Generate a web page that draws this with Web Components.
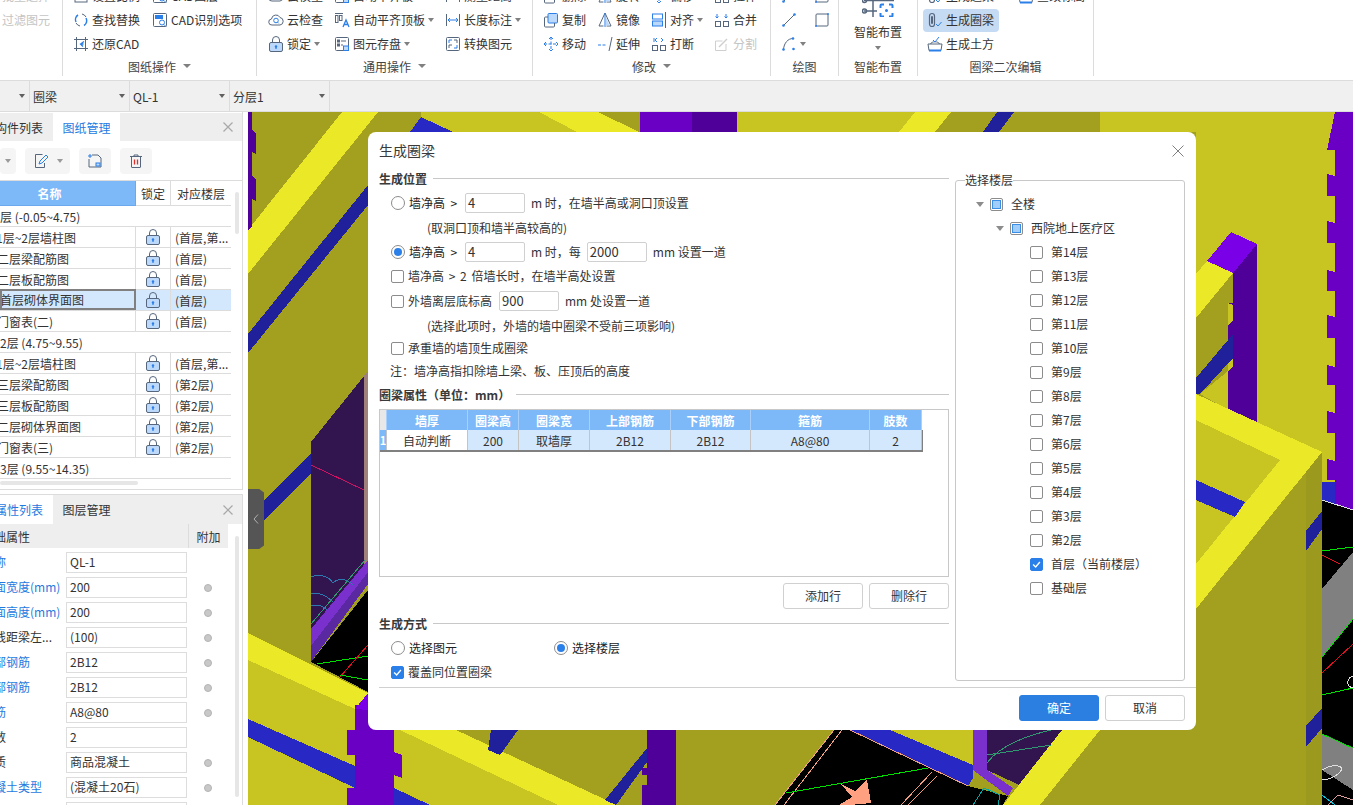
<!DOCTYPE html>
<html lang="zh">
<head>
<meta charset="utf-8">
<title>生成圈梁</title>
<style>
    html, body { margin: 0; height: 100%; overflow: hidden; background: #fff; font: 12px "Noto Sans CJK SC", sans-serif; color: #333; }
    body { display: flex; flex-direction: column; width: 1353px; height: 805px; }
    .blank { display: block; }
</style>
</head>
<body>
<rb-bar>
    <rb-group width="63" pad="2" cols="60px">
        <rb-item label="批量选择" off></rb-item>
        <rb-item label="过滤图元" off></rb-item>
        <span class="blank"></span>
    </rb-group>
    <rb-group width="194" pad="10" cols="79px 110px" label="图纸操作" caret>
        <rb-item icon="ratio" label="设置比例"></rb-item><rb-item icon="cad" label="CAD图层"></rb-item>
        <rb-item icon="swap" label="查找替换"></rb-item><rb-item icon="cad" label="CAD识别选项"></rb-item>
        <rb-item icon="restore" label="还原CAD"></rb-item>
    </rb-group>
    <rb-group width="276" pad="11" cols="66px 111px 100px" label="通用操作" caret>
        <rb-item icon="cloud" label="云模型"></rb-item><rb-item icon="save" label="自动平齐板"></rb-item><rb-item icon="length" label="测量距离"></rb-item>
        <rb-item icon="cloud" label="云检查"></rb-item><rb-item icon="aligntop" label="自动平齐顶板" caret></rb-item><rb-item icon="length" label="长度标注" caret></rb-item>
        <rb-item icon="lock" label="锁定" caret></rb-item><rb-item icon="save" label="图元存盘" caret></rb-item><rb-item icon="convert" label="转换图元"></rb-item>
    </rb-group>
    <rb-group width="238" pad="10" cols="54px 54px 63px 60px" label="修改" caret>
        <rb-item icon="copy" label="删除"></rb-item><rb-item icon="mirror" label="旋转"></rb-item><rb-item icon="move" label="偏移"></rb-item><rb-item icon="merge" label="拉伸"></rb-item>
        <rb-item icon="copy" label="复制"></rb-item><rb-item icon="mirror" label="镜像"></rb-item><rb-item icon="align" label="对齐" caret></rb-item><rb-item icon="merge" label="合并"></rb-item>
        <rb-item icon="move" label="移动"></rb-item><rb-item icon="extend" label="延伸"></rb-item><rb-item icon="break" label="打断"></rb-item><rb-item icon="split" label="分割" off></rb-item>
    </rb-group>
    <rb-group width="68" pad="10" cols="33px 24px" label="绘图">
        <rb-item icon="line"></rb-item><rb-item icon="rect"></rb-item>
        <rb-item icon="line"></rb-item><rb-item icon="rect"></rb-item>
        <rb-item icon="arc" caret></rb-item>
    </rb-group>
    <rb-group width="79" pad="0" cols="78px" label="智能布置">
        <rb-big label="智能布置"></rb-big>
    </rb-group>
    <rb-group width="176" pad="5" cols="95px 76px" label="圈梁二次编辑">
        <rb-item icon="ring" label="生成过梁" style="margin-left:4px"></rb-item><rb-item icon="earth" label="查改标高"></rb-item>
        <rb-item icon="ring" label="生成圈梁" on></rb-item><span class="blank"></span>
        <rb-item icon="earth" label="生成土方" style="margin-left:4px"></rb-item>
    </rb-group>
</rb-bar>

<sel-bar>
    <sel-box width="30"></sel-box>
    <sel-box width="100" label="圈梁"></sel-box>
    <sel-box width="100" label="QL-1"></sel-box>
    <sel-box width="100" label="分层1"></sel-box>
</sel-bar>

<main-area>
    <side-panel></side-panel>
    <cad-view></cad-view>
    <ring-dialog></ring-dialog>
</main-area>

<script>
const ST = '#56677d', BL = '#2b7fe8', LB = '#bcd9fb';
const svg16 = (body) => `<svg width="16" height="16" viewBox="0 0 16 16" fill="none" stroke="${ST}" stroke-width="1" shape-rendering="geometricPrecision">${body}</svg>`;
const LOCK = `<rect x="1.500" y="6.500" width="13" height="9" rx="1.500" fill="${LB}"/><path d="M4.500 6.500V4a3.500 3.500 0 0 1 7 0v2.500"/><circle cx="8" cy="10.500" r="1.200" fill="${BL}" stroke="none"/><path d="M8 10.500v2.500" stroke="${BL}" stroke-width="1.200"/>`;
const ICONS = {
    ratio: `<rect x="2" y="2" width="12" height="12"/>`,
    swap: `<path d="M3 10a5.500 5.500 0 0 1 2-7" stroke="${BL}" stroke-width="1.500"/><path d="M13 6a5.500 5.500 0 0 1-2 7.500" stroke="${BL}" stroke-width="1.500"/><path d="M9 2a6 6 0 0 1 4 3M7 14a6 6 0 0 1-4-3"/>`,
    cad: `<rect x="1.500" y="1.500" width="13" height="13" rx="1"/><rect x="3" y="3" width="8" height="4" fill="${BL}" stroke="none"/><circle cx="10" cy="10.500" r="2.500" stroke="${BL}"/><path d="M12 12.500l2 2" stroke="${BL}"/>`,
    restore: `<path d="M1 3.500h14M1 12.500h14M3.500 1v14M12.500 1v14"/><path d="M11 5.500L7.500 8l2.500 2.500M7.500 8h3" stroke="${BL}" stroke-width="1.300"/>`,
    cloud: `<path d="M4 13a3 3 0 0 1-.500-6A4.500 4.500 0 0 1 12 5.500 3.800 3.800 0 0 1 12 13z"/><circle cx="8" cy="8.500" r="2.300" stroke="${BL}"/><path d="M9.600 10.200l1.200 1.200" stroke="${BL}"/>`,
    aligntop: `<path d="M1 1.500h8"/><rect x="1.500" y="3.500" width="2.500" height="7"/><rect x="5.500" y="3.500" width="2.500" height="5"/><path d="M9 15l3-7 3 7M10.200 12.500h3.600" stroke="${BL}" stroke-width="1.300"/>`,
    length: `<path d="M1.500 2v12M14.500 2v12"/><path d="M3 8h10M3 8l2-2M3 8l2 2M13 8l-2-2M13 8l-2 2" stroke="${BL}"/>`,
    lock: LOCK,
    save: `<rect x="1.500" y="1.500" width="13" height="13" rx="1"/><rect x="3.500" y="4" width="2" height="2"/><path d="M7 5h5"/><rect x="3.500" y="8" width="2" height="2"/><path d="M7 9h2"/><rect x="9.500" y="10" width="5" height="4.500" fill="${LB}" stroke="${BL}"/>`,
    convert: `<rect x="1.500" y="1.500" width="13" height="13" rx="1"/><path d="M4 7V4h3M12 9v3H9" stroke="${BL}"/><path d="M4 12V9h3M9 4h3v3"/>`,
    copy: `<rect x="5" y="1.500" width="9.500" height="9.500" rx="1" fill="${LB}" stroke="${BL}"/><path d="M5 5H2.500a1 1 0 0 0-1 1v8a1 1 0 0 0 1 1h8a1 1 0 0 0 1-1v-3"/>`,
    mirror: `<path d="M8 1L2 14h4.500" /><path d="M8 1l6 13H9.500"/><path d="M8 1v14" stroke="${BL}"/><path d="M9 5l3.500 8.500H9z" fill="${LB}" stroke="none"/>`,
    align: `<rect x="1.500" y="2" width="10" height="5" stroke="${BL}"/><rect x="1.500" y="9" width="10" height="5" fill="${LB}" stroke="${BL}"/><path d="M14.500 0v16"/>`,
    merge: `<rect x="1.500" y="9.500" width="5" height="5"/><rect x="9.500" y="9.500" width="5" height="5"/><path d="M3 2v4M3 6L1.500 4.500M3 6l1.500-1.500M12 2v4M12 6l-1.500-1.500M12 6l1.500-1.500" stroke="${BL}"/>`,
    move: `<path d="M8 1v14M1 8h14M8 1L6 3M8 1l2 2M8 15l-2-2M8 15l2-2M1 8l2-2M1 8l2 2M15 8l-2-2M15 8l-2 2" stroke="${BL}" stroke-dasharray="3 1.500"/>`,
    extend: `<path d="M1 9h8" stroke="${BL}" stroke-dasharray="3 1.500"/><path d="M15 1l-3 14"/>`,
    break: `<rect x="1.500" y="9.500" width="5" height="5"/><rect x="9.500" y="9.500" width="5" height="5"/><path d="M3 2v4M10 2l2 2-2 2M6 2L4 4l2 2" stroke="${BL}"/>`,
    split: `<path d="M12 8v6.500H1.500V5h7" stroke="#cfcfcf"/><path d="M5 11l8-8" stroke="#cfcfcf" stroke-width="1.500"/>`,
    line: `<path d="M2.500 13.500l11-11" stroke="${ST}"/><circle cx="2.500" cy="13.500" r="1.300" fill="${BL}" stroke="none"/><circle cx="13.500" cy="2.500" r="1.300" fill="${BL}" stroke="none"/>`,
    rect: `<rect x="2" y="2" width="12" height="12" rx="1"/><circle cx="2" cy="14" r="1" fill="${BL}" stroke="none"/><circle cx="14" cy="2" r="1" fill="${BL}" stroke="none"/>`,
    arc: `<path d="M2.500 13.500C3 7 7 2.500 12 2.500"/><circle cx="2.500" cy="13.500" r="1.300" fill="${BL}" stroke="none"/><circle cx="12" cy="2.500" r="1.300" fill="${BL}" stroke="none"/><circle cx="12.500" cy="13" r="1.300" fill="${BL}" stroke="none"/>`,
    ring: `<path d="M2.500 4a2.500 2.500 0 0 1 5 0v8a2.500 2.500 0 0 1-5 0z" stroke-width="1.200"/><path d="M4.500 4.500a.800.800 0 0 1 1 0v7a.800.800 0 0 1-1 0z"/><path d="M9 12l2 2 3.500-4" stroke="${BL}"/>`,
    earth: `<path d="M1 8h14l-1 6.500H2z"/><path d="M3.500 8c1-3 8-3 9 0"/><path d="M2 14.500h12" stroke="${BL}" stroke-width="2"/><path d="M6 4l2 2 4-5" stroke="${BL}"/>`
};

/* ribbon */
class RbBar extends HTMLElement {
    constructor() {
        super();
        this.attachShadow({ mode: 'open' }).innerHTML = `
            <style>:host { display: flex; flex: none; height: 80px; background: #fff; border-bottom: 1px solid #dcdcdc; overflow: hidden; }</style>
            <slot></slot>`;
    }
}
customElements.define('rb-bar', RbBar);

class RbGroup extends HTMLElement {
    connectedCallback() {
        const width = this.getAttribute('width');
        const label = this.getAttribute('label') || '';
        const caret = this.hasAttribute('caret') ? '<i></i>' : '';
        this.attachShadow({ mode: 'open' }).innerHTML = `
            <style>
                :host { display: flex; flex-direction: column; flex: none; box-sizing: border-box; height: 76px; width: ${width}px; border-right: 1px solid #dcdcdc; }
                .rows { display: grid; flex: none; height: 56px; overflow: hidden; align-content: end; grid-template-columns: ${this.getAttribute('cols')}; grid-auto-rows: 24px; padding-left: ${this.getAttribute('pad')}px; }
                .cap { display: flex; flex: none; justify-content: center; align-items: center; gap: 7px; height: 20px; color: #444; white-space: nowrap; }
                i { border: 4px solid transparent; border-top-color: #808080; border-bottom: 0; }
            </style>
            <div class="rows"><slot></slot></div>
            <div class="cap">${label}${caret}</div>`;
    }
}
customElements.define('rb-group', RbGroup);

class RbItem extends HTMLElement {
    connectedCallback() {
        const icon = this.getAttribute('icon');
        const label = this.getAttribute('label') || '';
        const caret = this.hasAttribute('caret') ? '<i></i>' : '';
        this.attachShadow({ mode: 'open' }).innerHTML = `
            <style>
                :host { display: flex; align-items: center; height: 24px; white-space: nowrap; color: #333; }
                :host([off]) { color: #c4c4c4; }
                .in { display: flex; align-items: center; gap: 3px; height: 23px; border-radius: 4px; }
                :host([on]) .in { background: #c5daf3; padding: 0 5px 0 4px; }
                svg { display: block; flex: none; }
                span { margin-bottom: 2px; }
                i { border: 3px solid transparent; border-top: 4px solid #808080; border-bottom: 0; }
            </style>
            <div class="in">${icon ? svg16(ICONS[icon]) : ''}${label ? `<span>${label}</span>` : ''}${caret}</div>`;
    }
}
customElements.define('rb-item', RbItem);

class RbBig extends HTMLElement {
    connectedCallback() {
        this.attachShadow({ mode: 'open' }).innerHTML = `
            <style>
                :host { display: flex; flex-direction: column; align-items: center; grid-row: span 3; height: 72px; color: #333; }
                svg { display: block; flex: none; }
                span { margin-top: 7px; margin-bottom: 1px; line-height: 16px; }
                i { margin-top: 5px; border: 3px solid transparent; border-top: 4px solid #808080; border-bottom: 0; }
            </style>
            <svg width="32" height="33" viewBox="0 0 32 33" fill="none" stroke="${ST}" stroke-width="1.500">
                <path d="M2 16.500h30M2 27h13M11 16.500V33"/><circle cx="2.500" cy="16.500" r="2"/><circle cx="2.500" cy="27" r="2"/>
                <path d="M22 20.500h-2.500a1 1 0 0 0-1 1V24M27 20.500h2.500a1 1 0 0 1 1 1V24M22 32.500h-2.500a1 1 0 0 1-1-1V29M27 32.500h2.500a1 1 0 0 0 1-1V29" stroke="${BL}" stroke-width="2"/><circle cx="24.500" cy="26.500" r="1.500" fill="${BL}" stroke="none"/>
            </svg>
            <span>${this.getAttribute('label')}</span><i></i>`;
    }
}
customElements.define('rb-big', RbBig);

/* selector strip */
class SelBar extends HTMLElement {
    constructor() {
        super();
        this.attachShadow({ mode: 'open' }).innerHTML = `
            <style>:host { display: flex; flex: none; height: 30px; background: #f0f0f0; border-bottom: 1px solid #dcdcdc; }</style>
            <slot></slot>`;
    }
}
customElements.define('sel-bar', SelBar);

class SelBox extends HTMLElement {
    connectedCallback() {
        this.attachShadow({ mode: 'open' }).innerHTML = `
            <style>
                :host { display: flex; align-items: center; justify-content: space-between; box-sizing: border-box; width: ${this.getAttribute('width')}px; padding: 0 4px 0 3px; border-right: 1px solid #dcdcdc; color: #333; }
                i { border: 3px solid transparent; border-top: 4px solid #606060; border-bottom: 0; }
            </style>
            <span>${this.getAttribute('label') || ''}</span><i></i>`;
    }
}
customElements.define('sel-box', SelBox);

class MainArea extends HTMLElement {
    constructor() {
        super();
        this.attachShadow({ mode: 'open' }).innerHTML = `
            <style>:host { display: flex; position: relative; flex: 1; min-height: 0; }</style>
            <slot></slot>`;
    }
}
customElements.define('main-area', MainArea);

/* left column: drawing list and property list */
const DRAWINGS = [
    { g: '首层 (-0.05~4.75)', o: -12 },
    { n: '1层~2层墙柱图', o: -4, f: '(首层,第...' },
    { n: '二层梁配筋图', o: -3, f: '(首层)' },
    { n: '二层板配筋图', o: -3, f: '(首层)' },
    { n: '首层砌体界面图', o: 0, f: '(首层)', sel: 1 },
    { n: '门窗表(二)', o: -3, f: '(首层)' },
    { g: '第2层 (4.75~9.55)', o: -12 },
    { n: '1层~2层墙柱图', o: -4, f: '(首层,第...' },
    { n: '三层梁配筋图', o: -3, f: '(第2层)' },
    { n: '三层板配筋图', o: -3, f: '(第2层)' },
    { n: '二层砌体界面图', o: -3, f: '(第2层)' },
    { n: '门窗表(三)', o: -3, f: '(第2层)' },
    { g: '第3层 (9.55~14.35)', o: -12 }
];
const PROPS = [
    ['名称', 'QL-1', 1, 0], ['截面宽度(mm)', '200', 1, 1], ['截面高度(mm)', '200', 1, 1], ['轴线距梁左...', '(100)', 0, 1],
    ['上部钢筋', '2B12', 1, 1], ['下部钢筋', '2B12', 1, 1], ['箍筋', 'A8@80', 1, 1], ['肢数', '2', 0, 0],
    ['材质', '商品混凝土', 0, 1], ['混凝土类型', '(混凝土20石)', 1, 1], ['', '', 0, 0]
];
const CLOSE = `<svg width="10" height="10" viewBox="0 0 10 10" stroke="#a8a8a8" stroke-width="1.200"><path d="M.5.5l9 9M9.500.5l-9 9"/></svg>`;

class SidePanel extends HTMLElement {
    constructor() {
        super();
        const rows = DRAWINGS.map((r) => r.g
            ? `<div class="row group"><span style="margin-left:${r.o}px">${r.g}</span></div>`
            : `<div class="row${r.sel ? ' sel' : ''}"><div class="c name"><span style="margin-left:${r.o}px">${r.n}</span></div><div class="c lock">${svg16(LOCK)}</div><div class="c fl">${r.f}</div></div>`).join('');
        const props = PROPS.map(([k, v, blue, dot]) => `
            <div class="prop"><div class="k${blue ? ' blue' : ''}"><span>${k}</span></div><div class="v">${v}</div><div class="d">${dot ? '<b></b>' : ''}</div></div>`).join('');
        this.attachShadow({ mode: 'open' }).innerHTML = `
            <style>
                :host { display: flex; flex-direction: column; flex: none; box-sizing: border-box; width: 248px; border-right: 5px solid #fff; overflow: hidden; background: #fff; color: #333; white-space: nowrap; }
                .pane { position: relative; display: flex; flex-direction: column; border-right: 1px solid #dcdcdc; overflow: hidden; }
                .top { height: 378px; border-bottom: 1px solid #dcdcdc; box-sizing: border-box; }
                .bot { flex: 1; margin-top: 4px; border-top: 1px solid #dcdcdc; }
                .tabs { display: flex; flex: none; align-items: center; height: 28px; margin-top: 1px; background: #eeeeef; }
                .bot .tabs { margin-top: 0; height: 29px; }
                .tab { display: flex; align-items: center; height: 100%; font-size: 12px; }
                .tab.on { background: #fff; color: #1f7ae0; }
                .x { margin-left: auto; margin-right: 9px; display: flex; }
                .tools { display: flex; flex: none; align-items: center; gap: 9px; height: 39px; border-bottom: 1px solid #dcdcdc; }
                .tool { display: flex; align-items: center; justify-content: center; height: 26px; background: #f5f5f5; border-radius: 4px; }
                .tool i { border: 3px solid transparent; border-top: 4px solid #9a9a9a; border-bottom: 0; margin-left: 8px; }
                .head { display: grid; flex: none; grid-template-columns: 136px 35px 60px; height: 25px; width: 231px; align-items: center; text-align: center; border-bottom: 0; }
                .head div { display: flex; align-items: center; justify-content: center; height: 100%; box-sizing: border-box; border-right: 1px solid #dcdcdc; border-bottom: 1px solid #dcdcdc; }
                .head .n { background: #7db8f8; color: #fff; font-weight: 700; padding-right: 36px; border-color: #6aa9ee; }
                .row { display: grid; grid-template-columns: 136px 35px 60px; width: 231px; height: 21px; box-sizing: border-box; border-bottom: 1px solid #dcdcdc; align-items: center; }
                .row.group { display: flex; }
                .c { display: flex; align-items: center; height: 20px; box-sizing: border-box; border-right: 1px solid #dcdcdc; overflow: hidden; }
                .c.lock { justify-content: center; }
                .c.fl { border-right: 0; padding-left: 4px; }
                .row.sel { background: #d4e8fd; }
                .row.sel .name { outline: 2px solid #808080; outline-offset: -2px; height: 21px; margin-top: -1px; }
                .vbar { position: absolute; left: 235px; width: 4px; background: #e6e6e6; border-radius: 2px; }
                .hbar { position: absolute; left: 0; top: 369px; width: 138px; height: 4px; background: #e6e6e6; border-radius: 2px; }
                .phead { display: grid; flex: none; grid-template-columns: 188px 40px; height: 24px; width: 228px; background: #eeeeef; align-items: center; }
                .phead span { margin-left: -18px; }
                .phead .add { display: flex; align-items: center; justify-content: center; height: 100%; border-left: 1px solid #dcdcdc; }
                .prop { display: grid; flex: none; grid-template-columns: 66px 121px 41px; height: 25px; align-items: center; width: 228px; }
                .k { padding-bottom: 2px; }
                .k span { margin-left: -18px; }
                .k.blue { color: #1f7ae0; }
                .v { box-sizing: border-box; height: 21px; line-height: 17px; padding-left: 3px; border: 1px solid #dddddd; }
                .d { display: flex; justify-content: center; }
                .d b { width: 8px; height: 8px; border-radius: 50%; background: #c8c8c8; border: 1px solid #b4b4b4; box-sizing: border-box; }
            </style>
            <div class="pane top">
                <div class="tabs">
                    <div class="tab" style="width:53px;padding-left:0"><span style="margin-left:-5px">构件列表</span></div>
                    <div class="tab on" style="width:67px;justify-content:center">图纸管理</div>
                    <div class="x">${CLOSE}</div>
                </div>
                <div class="tools">
                    <div class="tool" style="width:16px"><i style="margin:0"></i></div>
                    <div class="tool" style="width:45px">${svg16(`<path d="M9.500 1.500H2.500v13h9V10" /><path d="M6 11l1-3 6-6 2 2-6 6z" stroke="${BL}"/>`)}<i></i></div>
                    <div class="tool" style="width:32px">${svg16(`<path d="M5 2h6l3 3v9H2V6" /><path d="M3 1v4M1 3h4" stroke="${BL}"/><rect x="9" y="10" width="4" height="3" fill="${LB}" stroke="${BL}"/>`)}</div>
                    <div class="tool" style="width:32px">${svg16(`<path d="M2 3.500h12M6 3.500V2h4v1.500M3.500 3.500V14a.5.5 0 0 0 .5.5h8a.5.5 0 0 0 .5-.5V3.500"/><path d="M6.500 6.500v5M9.500 6.500v5" stroke="#e0302a" stroke-width="1.300"/>`)}</div>
                </div>
                <div class="head"><div class="n">名称</div><div>锁定</div><div style="border-right:0">对应楼层</div></div>
                ${rows}
                <div class="vbar" style="top:80px;height:42px"></div>
                <div class="hbar"></div>
            </div>
            <div class="pane bot">
                <div class="tabs">
                    <div class="tab on" style="width:53px"><span style="margin-left:-5px">属性列表</span></div>
                    <div class="tab" style="width:67px;justify-content:center">图层管理</div>
                    <div class="x">${CLOSE}</div>
                </div>
                <div class="phead"><span>基础属性</span><div class="add">附加</div></div>
                <div style="height:2px;flex:none"></div>
                ${props}
                <div class="vbar" style="top:41px;height:261px"></div>
            </div>`;
    }
}
customElements.define('side-panel', SidePanel);

/* model view: flat polygons, free canvas */
const C = { dk: '#a3a01f', md: '#c8c523', ye: '#ebe828', pu: '#6a00c4', pd: '#4e0098', pl: '#7a00e8', bl: '#2828c4', bd: '#20209a', gr: '#808080', hole: '#32144e', ps: '#7a30cc' };
const POLYS = [
    // upper wall, left and top
    [C.ye, '248,230 342,112 378,112 248,274'],
    [C.bd, '248,334 368,185 368,205 248,353'],
    [C.pd, '248,112 252,112 252,130 256,134 256,154 252,152 252,176 256,180 256,201 252,199 252,226 248,230'],
    [C.md, '421,112 539,112 577,132 640,170 640,400 421,400'],
    [C.bl, '421,117 453,132 410,132'],
    [C.ye, '539,112 598,112 639,132 577,132'],
    [C.pu, '640,112 692,112 692,132 640,132'],
    [C.pd, '692,112 737,112 737,132 692,132'],
    [C.md, '737,112 915,112 899,132 737,132'],
    [C.ye, '915,112 951,112 935,132 899,132'],
    [C.bd, '997,112 1014,112 999,132 983,132'],
    [C.md, '1100,112 1353,112 1353,640 1196,640 1196,132 1100,132'],
    // door hole at the left
    [C.hole, '311,442 364,376 368,376 368,560 311,629'],
    ['#a0807a', '364,376 368,371 368,560 364,565'],
    [C.ps, '311,629 368,560 368,584 311,662'],
    ['#5a28a0', '311,646 368,572 368,584 311,662'],
    ['#000', '311,662 368,590 368,692'],
    [C.bd, '264,500 311,453 311,473 264,520'],
    // lower left beam
    [C.md, '248,660 355,709 394,730 394,805 248,805'],
    [C.ye, '248,633 368,693 355,709 248,660'],
    [C.bl, '248,719 355,766 355,788 248,737'],
    [C.pu, '355,705 394,705 394,805 347,805 347,788 355,788 355,755 347,755 347,730 355,730'],
    [C.pl, '355,709 368,693 394,693 394,712'],
    // bottom middle
    [C.md, '394,730 400,730 558,805 394,805'],
    [C.ye, '400,730 456,730 617,805 558,805'],
    [C.bl, '394,788 430,805 394,805'],
    [C.pu, '394,752 402,755 402,778 394,775'],
    [C.bd, '491,730 518,730 500,755 488,750'],
    [C.bd, '647,748 647,762 616,805 605,800'],
    [C.pd, '647,730 676,730 676,805 642,805 642,785 647,785 647,775 642,775 642,768 647,768'],
    ['#000', '834,730 850,730 968,786 1008,796 1003,805 775,805'],
    [C.md, '890,730 973,730 973,765'],
    [C.bl, '850,730 890,730 973,765 973,778 968,786'],
    [C.hole, '987,730 1062,730 1030,790 987,770'],
    [C.ps, '973,730 987,730 987,770 1013,788 1008,796 973,770'],
    [C.ye, '1062,730 1100,730 1040,805 1003,805'],
    // right hand side
    [C.pu, '1335,112 1353,112 1353,510 1335,510 1335,480 1327,480 1327,459 1335,461 1335,433 1327,433 1327,411 1335,413 1335,385 1327,385 1327,365 1335,367 1335,338 1327,338 1327,315 1335,317 1335,291 1327,291 1327,270 1335,272 1335,243 1327,243 1327,221 1335,223 1335,196 1327,196 1327,174 1335,176 1335,150 1327,150'],
    [C.pl, '1207,261 1231,232 1257,244 1233,273'],
    [C.pd, '1233,273 1257,244 1257,422 1228,410 1228,371 1233,367 1233,352 1228,350 1228,325 1233,320 1233,305 1228,303'],
    [C.ye, '1196,274 1207,261 1233,273 1196,318'],
    [C.dk, '1196,318 1233,273 1233,303 1228,303 1228,410 1196,396'],
    [C.bd, '1196,378 1233,334 1233,358 1200,394 1196,394'],
    [C.md, '1200,394 1228,371 1228,410'],
    [C.ye, '1196,394 1322,452 1196,609'],
    [C.md, '1196,420 1280,460 1196,564'],
    [C.bl, '1196,480 1245,502 1235,517 1196,500'],
    [C.dk, '1196,609 1322,452 1322,805 1196,805'],
    ['#9c9a1e', '1306,472 1322,452 1322,805 1306,805'],
    [C.bd, '1306,531 1322,511 1322,529 1306,551'],
    [C.bd, '1306,726 1322,708 1322,728 1306,747'],
    ['#000', '1322,500 1353,510 1353,805 1322,805'],
    [C.bl, '1322,482 1335,482 1335,505 1322,500'],
    [C.gr, '1322,589 1353,552 1353,619 1322,657'],
    [C.gr, '1322,734 1353,748 1353,790 1322,770']
];
const LINES = [
    ['#d01060', 'M311 465L364 490'],
    ['#2f9a70', 'M311 624L365 560'],
    ['#2a7ab0', 'M311 577c10-4 18 0 22 6 6-6 14-4 20 2M311 594c8-2 16 2 22 8M311 606c6-2 12 0 16 4'],
    ['#00e000', 'M317 664L368 656'],
    ['#00e000', 'M340 675L368 680'],
    ['#e01020', 'M340 677L368 645'],
    ['#00e000', 'M1322 551L1353 547'],
    ['#e01020', 'M1322 555L1340 564'],
    ['#00e000', 'M1322 657L1353 619'],
    ['#e01020', 'M1322 673L1353 644'],
    ['#00e000', 'M1322 695L1353 688'],
    ['#00e000', 'M1322 734L1353 748'],
    ['#e0e0e0', 'M1353 676c-6 2-8 10 0 12'],
    ['#e0e0e0', 'M1322 770c8-5 16-6 20-2-1 6-12 12-20 12'],
    ['#00c8e0', 'M1322 795L1335 805'],
    ['#e0a0a0', 'M1328 805L1338 795 1353 800'],
    ['#e0e0e0', 'M1322 500L1353 510'],
    ['#f0a080', 'M834 730L775 805M842 730L784 805M850 730L968 786'],
    ['#f0a080', 'M932 772L901 805M937 776L908 805'],
    ['#00e000', 'M786 793L928 768'],
    ['#2f9a70', 'M987 763C1000 745 1030 735 1051 730M987 755L1051 745'],
    ['#00a8a8', 'M973 805L984 788 1000 795 998 805']
];

class CadView extends HTMLElement {
    constructor() {
        super();
        const shapes = POLYS.map(([fill, pts]) => `<polygon fill="${fill}" points="${pts}"/>`).join('');
        const lines = LINES.map(([col, d]) => `<path fill="none" stroke="${col}" d="${d}"/>`).join('');
        this.attachShadow({ mode: 'open' }).innerHTML = `
            <style>
                :host { position: relative; display: block; flex: 1; overflow: hidden; background: ${C.dk}; }
                svg { display: block; }
                .grip { position: absolute; left: 0; top: 377px; width: 16px; height: 60px; background: #555; clip-path: polygon(0 0, 70% 0, 100% 6%, 100% 94%, 70% 100%, 0 100%); display: flex; align-items: center; justify-content: center; }
            </style>
            <svg width="1105" height="693" viewBox="248 112 1105 693" shape-rendering="crispEdges">
                ${shapes}${lines}
                <polygon fill="#ffa080" points="841,784 855,791 867,780 871,803 850,805 839,805 852,797"/>
            </svg>
            <div class="grip"><svg width="6" height="10" viewBox="0 0 6 10" fill="none" stroke="#b0b0b0"><path d="M5 .5L1 5l4 4.500"/></svg></div>`;
    }
}
customElements.define('cad-view', CadView);

/* dialog controls */
class GdSection extends HTMLElement {
    constructor() {
        super();
        this.attachShadow({ mode: 'open' }).innerHTML = `
            <style>
                :host { display: flex; align-items: center; gap: 6px; font-weight: 700; color: #3a3a3a; white-space: nowrap; }
                b { flex: 1; height: 1px; background: #c8c8c8; }
            </style>
            <slot></slot><b></b>`;
    }
}
customElements.define('gd-section', GdSection);

class GdRow extends HTMLElement {
    constructor() {
        super();
        this.attachShadow({ mode: 'open' }).innerHTML = `
            <style>:host { display: flex; align-items: center; box-sizing: border-box; white-space: nowrap; height: var(--h, 24px); padding-left: var(--i, 0); padding-bottom: var(--b, 0); color: #333; }</style>
            <slot></slot>`;
    }
}
customElements.define('gd-row', GdRow);

class GdRadio extends HTMLElement {
    connectedCallback() {
        this.attachShadow({ mode: 'open' }).innerHTML = `
            <style>
                :host { display: inline-flex; align-items: center; gap: 4px; color: var(--c, #222); }
                b { display: flex; align-items: center; justify-content: center; box-sizing: border-box; width: 14px; height: 14px; border: 1px solid #8c8c8c; border-radius: 50%; background: #fff; }
                i { width: 8px; height: 8px; border-radius: 50%; background: #2b7fe8; }
                span { display: block; margin-bottom: 2px; }
            </style>
            <b>${this.hasAttribute('on') ? '<i></i>' : ''}</b><span><slot></slot></span>`;
    }
}
customElements.define('gd-radio', GdRadio);

class GdCheck extends HTMLElement {
    connectedCallback() {
        const st = this.getAttribute('state');
        const inner = st === 'on'
            ? `<svg width="13" height="13" viewBox="0 0 13 13" fill="none" stroke="#fff" stroke-width="1.600"><path d="M2.500 6.500l3 3 5-6"/></svg>`
            : st === 'part' ? '<i></i>' : '';
        this.attachShadow({ mode: 'open' }).innerHTML = `
            <style>
                :host { display: inline-flex; align-items: center; gap: var(--g, 4px); }
                b { display: flex; align-items: center; justify-content: center; box-sizing: border-box; flex: none; width: 13px; height: 13px; border: 1px solid #8c8c8c; border-radius: 2px; background: #fff; }
                b.on { background: #2b7fe8; border-color: #2b7fe8; }
                i { width: 9px; height: 9px; background: #a0cdfb; border: 1px solid #3a8ee6; box-sizing: border-box; }
                span { display: block; margin-bottom: 2px; word-spacing: 2px; }
            </style>
            <b class="${st === 'on' ? 'on' : ''}">${inner}</b><span><slot></slot></span>`;
    }
}
customElements.define('gd-check', GdCheck);

class GdInput extends HTMLElement {
    constructor() {
        super();
        this.attachShadow({ mode: 'open' }).innerHTML = `
            <style>:host { display: block; flex: none; box-sizing: border-box; width: 60px; height: 20px; line-height: 18px; padding-left: 2px; border: 1px solid #d0d0d0; border-radius: 2px; background: #fff; color: #333; font-size: 13px; }</style>
            <slot></slot>`;
    }
}
customElements.define('gd-input', GdInput);

class GdButton extends HTMLElement {
    constructor() {
        super();
        this.attachShadow({ mode: 'open' }).innerHTML = `
            <style>
                :host { display: flex; align-items: center; justify-content: center; box-sizing: border-box; width: 80px; height: 26px; padding-bottom: 2px; border: 1px solid #d0d0d0; border-radius: 3px; background: #fff; color: #333; }
                :host([primary]) { background: #2b7fe0; border-color: #2b7fe0; color: #fff; }
            </style>
            <slot></slot>`;
    }
}
customElements.define('gd-button', GdButton);

class RingGrid extends HTMLElement {
    constructor() {
        super();
        const cols = '7px 81px 51px 71px 81px 80px 119px 52px';
        const head = ['墙厚', '圈梁高', '圈梁宽', '上部钢筋', '下部钢筋', '箍筋', '肢数'];
        const vals = ['自动判断', '200', '取墙厚', '2B12', '2B12', 'A8@80', '2'];
        this.attachShadow({ mode: 'open' }).innerHTML = `
            <style>
                :host { display: block; box-sizing: border-box; height: 168px; border: 1px solid #c8c8c8; background: #fff; }
                .g { display: grid; grid-template-columns: ${cols}; width: 542px; }
                .g div { display: flex; align-items: center; justify-content: center; box-sizing: border-box; border-right: 1px solid #c4c4c4; }
                .h { height: 20px; }
                .h div { background: #7db8f8; color: #fff; font-weight: 700; border-right-color: #a8d0fb; }
                .h .n { background: #e8e8e8; }
                .r { height: 22px; border-bottom: 2px solid #808080; width: 543px; border-right: 2px solid #808080; box-sizing: border-box; }
                .r div { background: #d4e8fd; color: #333; height: 20px; }
                .r .n { background: #7db8f8; color: #fff; font-weight: 700; font-size: 11px; }
                .r .w { background: #fff; }
            </style>
            <div class="g h"><div class="n"></div>${head.map((t) => `<div>${t}</div>`).join('')}</div>
            <div class="g r"><div class="n">1</div>${vals.map((t, i) => `<div class="${i ? '' : 'w'}">${t}</div>`).join('')}</div>`;
    }
}
customElements.define('ring-grid', RingGrid);

class FloorTree extends HTMLElement {
    constructor() {
        super();
        const floors = [];
        for (let n = 14; n >= 2; n--) floors.push([`第${n}层`, '']);
        floors.push(['首层（当前楼层）', 'on'], ['基础层', '']);
        const arrow = '<i></i>';
        this.attachShadow({ mode: 'open' }).innerHTML = `
            <style>
                :host { position: relative; display: block; box-sizing: border-box; height: 501px; margin-top: 10px; padding-top: 11px; border: 1px solid #c8c8c8; border-radius: 3px; color: #333; white-space: nowrap; }
                .legend { position: absolute; left: 9px; top: -9px; line-height: 16px; padding-right: 0; background: #fff; }
                .n { display: flex; align-items: center; height: 24px; --g: 8px; }
                i { border: 4px solid transparent; border-top: 5px solid #8c8c8c; border-bottom: 0; width: 0; height: 0; margin-right: 6px; margin-top: 1px; }
            </style>
            <div class="legend">选择楼层</div>
            <div class="n" style="padding-left:20px">${arrow}<gd-check state="part">全楼</gd-check></div>
            <div class="n" style="padding-left:40px">${arrow}<gd-check state="part">西院地上医疗区</gd-check></div>
            ${floors.map(([t, st]) => `<div class="n" style="padding-left:74px"><gd-check state="${st}">${t}</gd-check></div>`).join('')}`;
    }
}
customElements.define('floor-tree', FloorTree);

class RingDialog extends HTMLElement {
    constructor() {
        super();
        this.attachShadow({ mode: 'open' }).innerHTML = `
            <style>
                :host { position: absolute; left: 368px; top: 20px; width: 828px; height: 598px; box-sizing: border-box; background: #fff; border-radius: 8px; display: flex; flex-direction: column; color: #333; }
                .title { display: flex; flex: none; align-items: center; justify-content: space-between; height: 38px; padding: 0 12px 0 11px; font-size: 14px; color: #3a3a3a; }
                .title span { margin-bottom: 2px; }
                .body { display: grid; flex: none; grid-template-columns: 570px 230px; gap: 6px; height: 517px; padding: 0 11px; }
                .col { display: flex; flex-direction: column; }
                .foot { display: flex; flex: none; justify-content: flex-end; gap: 6px; margin: 0 0 0 11px; padding: 7px 11px 0 0; border-top: 1px solid #d0d0d0; }
                .acts { display: flex; justify-content: flex-end; gap: 6px; margin-top: 6px; }
                .gt { display: block; width: 56px; white-space: pre; }
                .t6 { margin: 0 6px 2px; }
            </style>
            <div class="title"><span>生成圈梁</span><svg width="12" height="12" viewBox="0 0 12 12" stroke="#808080"><path d="M.5.5l11 11M11.500.5l-11 11"/></svg></div>
            <div class="body">
                <div class="col">
                    <gd-section style="height:16px">生成位置</gd-section>
                    <div style="height:5px"></div>
                    <gd-row style="--h:24px;--i:12px"><gd-radio><span class="gt">墙净高  &gt;</span></gd-radio><gd-input>4</gd-input><span class="t6">m 时，在墙半高或洞口顶设置</span></gd-row>
                    <gd-row style="--h:26px;--i:48px;--b:2px">(取洞口顶和墙半高较高的)</gd-row>
                    <gd-row style="--h:22px;--i:12px"><gd-radio on><span class="gt">墙净高  &gt;</span></gd-radio><gd-input>4</gd-input><span class="t6">m 时，每</span><gd-input>2000</gd-input><span class="t6">mm 设置一道</span></gd-row>
                    <gd-row style="--h:26px;--i:12px"><gd-check>墙净高 &gt; 2 倍墙长时，在墙半高处设置</gd-check></gd-row>
                    <gd-row style="--h:24px;--i:12px"><gd-check><span style="width:91px;display:block">外墙离层底标高</span></gd-check><gd-input>900</gd-input><span class="t6">mm 处设置一道</span></gd-row>
                    <gd-row style="--h:26px;--i:48px;--b:2px">(选择此项时，外墙的墙中圈梁不受前三项影响)</gd-row>
                    <gd-row style="--h:18px;--i:12px"><gd-check>承重墙的墙顶生成圈梁</gd-check></gd-row>
                    <gd-row style="--h:28px;--i:11px;--b:2px">注：墙净高指扣除墙上梁、板、压顶后的高度</gd-row>
                    <gd-section style="height:20px;padding-bottom:2px;box-sizing:border-box">圈梁属性（单位：mm）</gd-section>
                    <div style="height:4px"></div>
                    <ring-grid></ring-grid>
                    <div class="acts"><gd-button>添加行</gd-button><gd-button>删除行</gd-button></div>
                    <gd-section style="height:28px">生成方式</gd-section>
                    <gd-row style="--h:22px;--i:12px"><gd-radio style="width:163px">选择图元</gd-radio><gd-radio on>选择楼层</gd-radio></gd-row>
                    <gd-row style="--h:26px;--i:12px"><gd-check state="on">覆盖同位置圈梁</gd-check></gd-row>
                </div>
                <floor-tree></floor-tree>
            </div>
            <div class="foot"><gd-button primary>确定</gd-button><gd-button>取消</gd-button></div>`;
    }
}
customElements.define('ring-dialog', RingDialog);
</script>
</body>
</html>
